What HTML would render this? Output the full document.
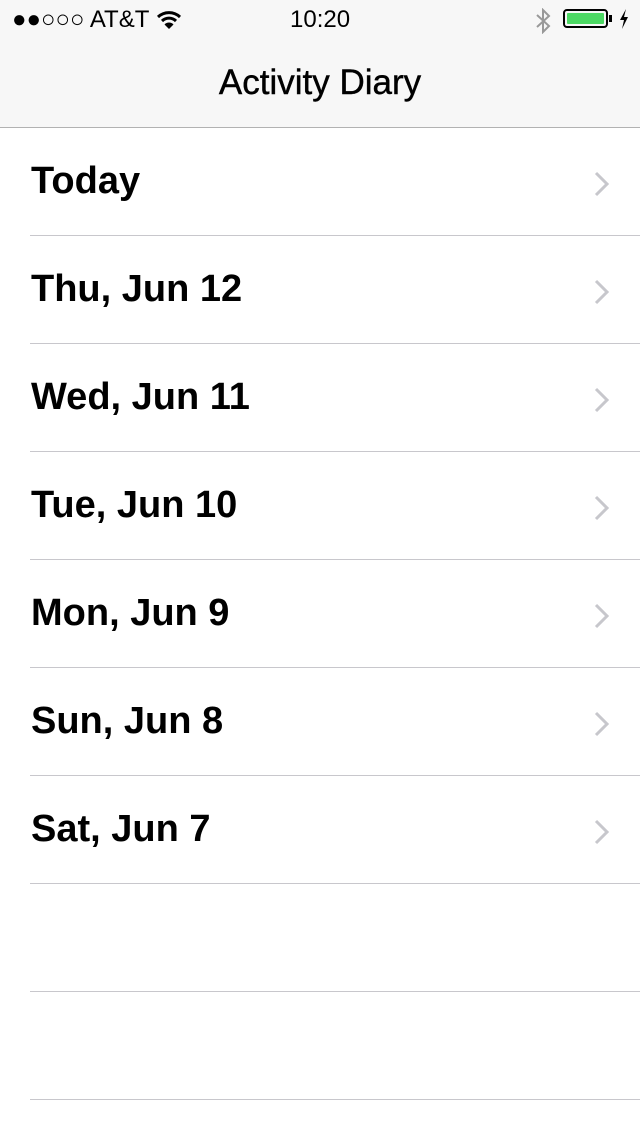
<!DOCTYPE html>
<html><head><meta charset="utf-8"><style>
html,body{margin:0;padding:0;}
body{width:640px;height:1136px;background:#fff;font-family:"Liberation Sans",sans-serif;position:relative;overflow:hidden;}
.nav{position:absolute;left:0;top:0;width:640px;height:127px;background:#f7f7f7;border-bottom:1px solid #b2b2b2;}
.sb{position:absolute;top:6px;font-size:24px;color:#000;}
.title{position:absolute;top:63px;width:640px;text-align:center;font-size:35px;color:#000;-webkit-text-stroke:0.4px #000;}
.row{position:absolute;left:0;width:640px;height:108px;}
.row .t{position:absolute;left:31px;top:32px;font-size:38px;font-weight:bold;color:#000;}
.row svg{position:absolute;left:593px;top:43px;}
.sep{position:absolute;left:30px;width:610px;height:1px;background:#c8c7cc;}
</style></head><body>
<div class="nav">
 <div class="sb" style="left:12px;">●●○○○ AT&amp;T</div>
 <svg style="position:absolute;left:156px;top:10px" width="26" height="20" viewBox="0 0 26 20"><path d="M2 7 A16 16 0 0 1 24 7" stroke="#000" stroke-width="3" fill="none"/><path d="M6 11 A10 10 0 0 1 20 11" stroke="#000" stroke-width="3" fill="none"/><path d="M13 19 L8.5 14.5 A6 6 0 0 1 17.5 14.5 Z" fill="#000"/></svg>
 <div class="sb" style="left:290px;">10:20</div>
 <svg style="position:absolute;left:534px;top:8px" width="18" height="26" viewBox="0 0 18 26"><path d="M3 7 L15 18 L9 24 V2 L15 8 L3 19" stroke="#999" stroke-width="2" fill="none"/></svg>
 <div style="position:absolute;left:563px;top:9px;width:45px;height:19px;border:2px solid #000;border-radius:4px;box-sizing:border-box;padding:2px;"><div style="width:100%;height:100%;background:#4cd964;border-radius:1px;"></div></div>
 <div style="position:absolute;left:609px;top:15px;width:3px;height:7px;background:#000;"></div>
 <svg style="position:absolute;left:618px;top:9px" width="12" height="20" viewBox="0 0 12 20"><path d="M8 0 L2 11 H6 L4 20 L10 8 H6 Z" fill="#000"/></svg>
 <div class="title">Activity Diary</div>
</div>

<div class="row" style="top:128px"><div class="t">Today</div><svg width="18" height="26" viewBox="0 0 18 26"><path d="M3 2 L14 13 L3 24" stroke="#c7c7cc" stroke-width="3" fill="none"/></svg></div>
<div class="sep" style="top:235px"></div>
<div class="row" style="top:236px"><div class="t">Thu, Jun 12</div><svg width="18" height="26" viewBox="0 0 18 26"><path d="M3 2 L14 13 L3 24" stroke="#c7c7cc" stroke-width="3" fill="none"/></svg></div>
<div class="sep" style="top:343px"></div>
<div class="row" style="top:344px"><div class="t">Wed, Jun 11</div><svg width="18" height="26" viewBox="0 0 18 26"><path d="M3 2 L14 13 L3 24" stroke="#c7c7cc" stroke-width="3" fill="none"/></svg></div>
<div class="sep" style="top:451px"></div>
<div class="row" style="top:452px"><div class="t">Tue, Jun 10</div><svg width="18" height="26" viewBox="0 0 18 26"><path d="M3 2 L14 13 L3 24" stroke="#c7c7cc" stroke-width="3" fill="none"/></svg></div>
<div class="sep" style="top:559px"></div>
<div class="row" style="top:560px"><div class="t">Mon, Jun 9</div><svg width="18" height="26" viewBox="0 0 18 26"><path d="M3 2 L14 13 L3 24" stroke="#c7c7cc" stroke-width="3" fill="none"/></svg></div>
<div class="sep" style="top:667px"></div>
<div class="row" style="top:668px"><div class="t">Sun, Jun 8</div><svg width="18" height="26" viewBox="0 0 18 26"><path d="M3 2 L14 13 L3 24" stroke="#c7c7cc" stroke-width="3" fill="none"/></svg></div>
<div class="sep" style="top:775px"></div>
<div class="row" style="top:776px"><div class="t">Sat, Jun 7</div><svg width="18" height="26" viewBox="0 0 18 26"><path d="M3 2 L14 13 L3 24" stroke="#c7c7cc" stroke-width="3" fill="none"/></svg></div>
<div class="sep" style="top:883px"></div>
<div class="sep" style="top:991px"></div>
<div class="sep" style="top:1099px"></div>
</body></html>
